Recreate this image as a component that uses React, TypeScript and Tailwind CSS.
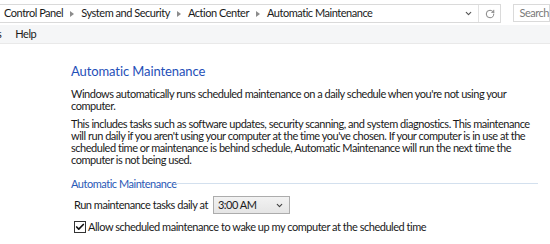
import { ChevronDown, RotateCw, Check } from 'lucide-react';

const crumbs = ['Control Panel', 'System and Security', 'Action Center', 'Automatic Maintenance'];

const intro = [
  "Windows automatically runs scheduled maintenance on a daily schedule when you're not using your",
  'computer.',
];

const details = [
  'This includes tasks such as software updates, security scanning, and system diagnostics. This maintenance',
  "will run daily if you aren't using your computer at the time you've chosen. If your computer is in use at the",
  'scheduled time or maintenance is behind schedule, Automatic Maintenance will run the next time the',
  'computer is not being used.',
];

function CrumbArrow() {
  return (
    <span className="flex w-[18px] justify-center">
      <svg width="4" height="6" viewBox="0 0 4 6">
        <path d="M0 0 L4 3 L0 6 Z" fill="#8c8c8c" />
      </svg>
    </span>
  );
}

export default function App() {
  return (
    <div className="h-[244px] w-[550px] overflow-hidden bg-white font-['Lato','Noto_Sans',sans-serif] text-[11px] tracking-[-0.47px] text-[#1a1a1a]">
      {/* Address bar */}
      <div className="flex h-[25px] items-start pt-[4px]">
        <div className="-ml-px flex h-[19px] w-[508px] items-center border border-[#dadada]">
          <div className="flex flex-1 items-center whitespace-nowrap pl-[4px]">
            {crumbs.map((c, i) => (
              <span key={c} className="flex items-center">
                {i > 0 && <CrumbArrow />}
                {c}
              </span>
            ))}
          </div>
          <div className="flex h-full w-[14px] items-center justify-center">
            <ChevronDown className="h-[9px] w-[9px] text-[#555]" strokeWidth={3} />
          </div>
          <div className="ml-[3px] h-full w-px bg-[#e2e2e2]" />
          <div className="flex h-full w-[21px] items-center justify-center">
            <RotateCw className="h-[10px] w-[10px] text-[#6f6f6f]" strokeWidth={2} />
          </div>
        </div>
        <div className="ml-[12px] flex h-[18px] flex-1 items-center border border-[#dadada] pl-[5px] text-[#7a7a7a]">
          Search
        </div>
      </div>

      {/* Menu bar */}
      <div className="flex h-[19px] items-center border-b border-[#e9e9e9] bg-[#f5f6f7]">
        <span className="-ml-[3px]">s</span>
        <span className="ml-[14px]">Help</span>
      </div>

      {/* Content */}
      <div className="pl-[71px] pt-[18px]">
        <h1 className="text-[13px] leading-[18px] tracking-[-0.1px] text-[#1f4fb8]">Automatic Maintenance</h1>

        <div className="mt-[8px] leading-[12px]">
          {intro.map((l) => (
            <div key={l} className="whitespace-nowrap">{l}</div>
          ))}
        </div>

        <div className="mt-[6px] leading-[12px]">
          {details.map((l) => (
            <div key={l} className="whitespace-nowrap">{l}</div>
          ))}
        </div>

        <div className="mt-[12px] flex w-[467px] items-center leading-[12px]">
          <span className="whitespace-nowrap text-[#2a59b6]">Automatic Maintenance</span>
          <div className="mt-[-1px] h-px flex-1 bg-[#d3e0ee]" />
        </div>

        <div className="ml-[3px] mt-[5px] flex h-[20px] items-center">
          <span className="whitespace-nowrap">Run maintenance tasks daily at</span>
          <div className="ml-[5px] flex h-[18px] w-[77px] items-center justify-between border border-[#acacac] bg-gradient-to-b from-[#f2f2f2] to-[#e5e5e5] pl-[4px] pr-[5px]">
            <span>3:00 AM</span>
            <ChevronDown className="h-[9px] w-[9px] text-[#404040]" strokeWidth={3} />
          </div>
        </div>

        <label className="ml-[3px] mt-[2px] flex h-[20px] items-center">
          <span className="flex h-[12px] w-[12px] items-center justify-center border border-[#333] bg-white">
            <Check className="h-[10px] w-[10px] text-[#111]" strokeWidth={4} />
          </span>
          <span className="ml-[2px] whitespace-nowrap">
            Allow scheduled maintenance to wake up my computer at the scheduled time
          </span>
        </label>
      </div>
    </div>
  );
}
